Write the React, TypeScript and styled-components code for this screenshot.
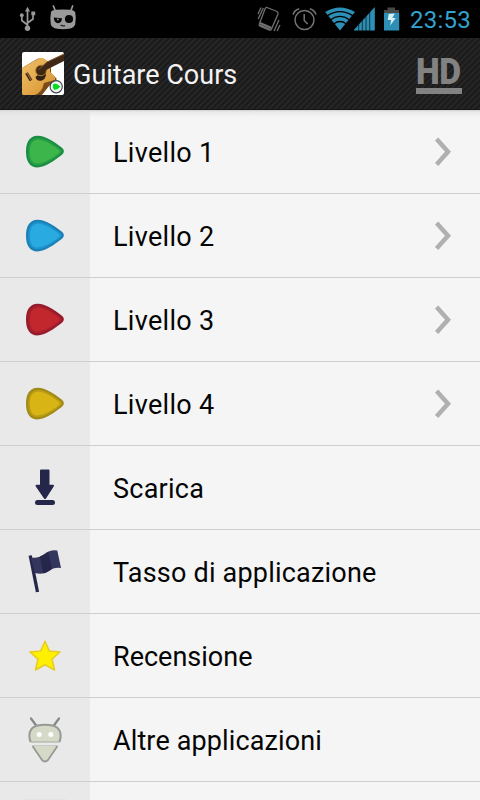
import React from 'react';
import styled, { createGlobalStyle } from 'styled-components';

const GlobalStyle = createGlobalStyle`
  * { box-sizing: border-box; }
  html, body { margin: 0; padding: 0; background: #f5f5f5; }
  body { font-family: Roboto, sans-serif; overflow: hidden; }
  svg { display: block; flex: none; }
`;

const Screen = styled.div`
  width: 480px;
  height: 800px;
  display: flex;
  flex-direction: column;
  overflow: hidden;
  background: #f5f5f5;
`;

const StatusBar = styled.header`
  height: 38px;
  flex: none;
  display: flex;
  align-items: center;
  justify-content: space-between;
  background: #000;
  padding: 0 8px 0 18px;
`;

const StatusIcons = styled.div`
  display: flex;
  align-items: center;
  height: 38px;
`;

const Clock = styled.span`
  width: 62px;
  margin-left: 10px;
  color: #33a3cf;
  font-size: 24px;
  line-height: 38px;
  letter-spacing: 0.25px;
  white-space: nowrap;
  padding-top: 1px;
`;

const ActionBar = styled.div`
  height: 72px;
  flex: none;
  display: flex;
  align-items: center;
  padding: 0 18px 0 22px;
  background: repeating-linear-gradient(135deg, #1b1b1b 0 1.5px, #262626 2.2px 3.4px, #1b1b1b 4.24px);
  border-bottom: 1px solid #161616;
`;

const Title = styled.h1`
  flex: 1;
  margin: 0 0 0 9px;
  color: #f3f3f3;
  font-size: 27px;
  font-weight: 400;
  line-height: 36px;
  white-space: nowrap;
  padding-top: 2px;
`;

const HdButton = styled.button`
  width: 46px;
  margin: 2px 0 0;
  padding: 0;
  border: 0;
  background: none;
  color: #828282;
  font: 900 37px/33px Roboto, sans-serif;
  text-align: left;
  border-bottom: 6px solid #828282;
`;

const HdText = styled.span`
  display: block;
  width: 60px;
  letter-spacing: -0.5px;
  transform: scaleX(0.91);
  transform-origin: left center;
`;

const List = styled.ul`
  flex: 1;
  margin: 0;
  padding: 0;
  list-style: none;
  overflow: hidden;
  background: linear-gradient(#d0d0d0, #e9e9e9 2px, #f5f5f5 7px);
`;

const Row = styled.li`
  height: 84px;
  display: flex;
  align-items: stretch;
  border-bottom: 1px solid #cecece;
`;

const IconCell = styled.div<{ $peek?: boolean }>`
  width: 90px;
  flex: none;
  display: flex;
  align-items: ${(p) => (p.$peek ? 'flex-start' : 'center')};
  padding-top: ${(p) => (p.$peek ? 17 : 0)}px;
  justify-content: center;
  background: rgba(220, 220, 220, 0.49);
`;

const Label = styled.span<{ $spacing: number }>`
  flex: 1;
  padding: 2px 0 0 23px;
  font-size: 27px;
  line-height: 83px;
  height: 83px;
  letter-spacing: ${(p) => p.$spacing}px;
  color: #050505;
  white-space: nowrap;
`;

const ArrowCell = styled.div`
  display: flex;
  align-items: center;
  padding-right: 28px;
`;

const UsbIcon = () => (
  <svg width="20" height="28" viewBox="0 0 20 28">
    <path d="M9.5 24V6M9.5 20L3.8 15.5V11M9.5 18L15 14V10" fill="none" stroke="#999" strokeWidth="1.7" />
    <path d="M9.5 1.8L12 6.4H7Z" fill="#999" />
    <circle cx="9.5" cy="23.2" r="2.7" fill="#999" />
    <circle cx="3.8" cy="10.2" r="1.9" fill="#999" />
    <path d="M13.3 6.5h3.9v3.8h-3.9Z" fill="#999" />
  </svg>
);

const CyanogenIcon = () => (
  <svg width="28" height="28" viewBox="0 0 28 28">
    <path d="M4.4 1L6.4 6M23.6 1L21.8 6" stroke="#999" strokeWidth="1.7" strokeLinecap="round" />
    <path d="M2 7Q3 5 7 4.8Q14 4.2 21 4.8Q25 5 26.2 7Q27.4 13 26.2 19.5Q25 23 20 23.7Q14 24.6 8 23.7Q3 23 1.8 19.5Q.8 13 2 7Z" fill="#9b9b9b" />
    <path d="M4.8 12.6L13 13.2Q12.8 18 9 18.2Q5 18 4.8 12.6Z" fill="#080808" />
    <circle cx="20" cy="14" r="4.1" fill="#080808" />
    <path d="M11.6 20Q13.4 21.3 16 20.6" stroke="#222" fill="none" strokeWidth="1.1" />
    <circle cx="8.8" cy="14.4" r=".9" fill="#999" />
  </svg>
);

const SilentIcon = () => (
  <svg width="24" height="28" viewBox="0 0 24 28" fill="none" stroke="#707070" strokeWidth="1.3">
    <path d="M10 2.5L20 6.5Q21.5 7.3 21 9L14.5 24Q14 25.5 12.5 25L3 21Q1.7 20.3 2.3 19L8 4Q8.7 2.2 10 2.5Z" />
    <path d="M3 18L14.5 23M3 20.5L13 24.8" strokeWidth="2" />
    <path d="M6.3 3L1.2 14M4 2.5L1 9M22 15L17 26M23 20L20 26" />
  </svg>
);

const AlarmIcon = () => (
  <svg width="26" height="28" viewBox="0 0 26 28" fill="none" stroke="#747474" strokeWidth="1.5">
    <circle cx="12.5" cy="15" r="9.5" />
    <path d="M12.2 9V15.5L15.7 19M1 9.5Q2.5 5 7.2 3.7M24 9.5Q22.5 5 17.8 3.7" />
  </svg>
);

const WifiIcon = () => (
  <svg width="31" height="24" viewBox="0 0 31 24">
    <path d="M15 23.5L.2 5Q15-4 30 5Z" fill="#2d8fb5" />
    <path d="M2.5 8.6Q15 .8 27.8 8.6M5.6 12.7Q15 6.2 24.4 12.7M8.8 16.7Q15 12.3 21.2 16.7" fill="none" stroke="#000" strokeWidth="1.3" />
  </svg>
);

const SignalIcon = () => (
  <svg width="22" height="24" viewBox="0 0 22 24">
    <path d="M0 23.5V22.7L20.8 0V23.5Z" fill="#2d8fb5" />
    <path d="M4.7 0V24M8.3 0V24M12 0V24M15.7 0V24" stroke="#000" strokeWidth="1" strokeOpacity=".65" />
  </svg>
);

const BatteryIcon = () => (
  <svg width="16" height="24" viewBox="0 0 16 24">
    <path d="M3.5 0.5H11V3H15V6H0V3H3.5Z" fill="#484848" />
    <path d="M0 6H15.2V23.5H0Z" fill="#2d8fb5" />
    <path d="M4.7 7L10.7 6.5L8.4 11H11.7L6.2 18.5L7.2 13H3.7Z" fill="#d9eef5" />
  </svg>
);

const GuitarIcon = () => (
  <svg width="42" height="43" viewBox="0 0 42 43">
    <defs>
      <clipPath id="appClip"><rect width="42" height="43" rx="2" /></clipPath>
      <linearGradient id="wood" x1="0" y1="0" x2="1" y2="1">
        <stop stopColor="#eebf68" /><stop offset=".55" stopColor="#e3a849" /><stop offset="1" stopColor="#d08f30" />
      </linearGradient>
    </defs>
    <g clipPath="url(#appClip)">
      <rect width="42" height="43" fill="#fff" />
      <path d="M0 16L15 7Q21 5 25 9Q30 13 29 21L35 27Q32 30 27 34L20 43H0Z" fill="#7c4a16" />
      <path d="M0 16L14 8Q20 4 24 8Q29 13 28 20Q34 24 33 28L22 31Q20 41 12 43H0Z" fill="url(#wood)" />
      <path d="M13.5 25L23 17Q26 26 20 28.5Q15 30 13.5 25Z" fill="#302114" />
      <circle cx="19" cy="18.5" r="5.3" fill="#3b2813" stroke="#ad7930" strokeWidth="1" />
      <path d="M16 18L25 10L42 2V9L28 16L19 21Z" fill="#3f2815" />
      <path d="M16 18L25 10L42 2" stroke="#81552a" fill="none" />
      <path d="M4.5 21L9 28.5" stroke="#3c2411" strokeWidth="3" />
      <path d="M5 21L9 28" stroke="#c99a56" strokeWidth=".7" />
      <circle cx="34.2" cy="34.7" r="6.1" fill="#f2f7f4" stroke="#40494a" strokeWidth="1.2" />
      <path d="M31.4 32Q33.6 30.4 38.4 34.5Q36.8 37 32.4 38.1Q29.8 35.6 31.4 32Z" fill="#08dc20" />
    </g>
  </svg>
);

const Pick = ({ fill, edge }: { fill: string; edge: string }) => (
  <svg width="40" height="34" viewBox="0 0 40 34">
    <path d="M12.5 .8C20 .6 29 6.5 37 12.8Q40.8 16.3 37 19.8C29 26 20 32.2 12.5 32.4C4.5 32.4 1 26 1 16.7S4.5 1 12.5 .8Z" fill={edge} />
    <path d="M12.2 3C19 2.2 28 8.3 35.5 14.3Q38 16.5 35.5 18.5C28 24.7 19.5 30 12.5 30.2C5.8 30.2 3.2 24.5 3.2 16.7S5.6 3.8 12.2 3Z" fill={fill} fillOpacity=".45" />
    <path d="M12.2 4.8C18 3.8 27 9.4 34 14.9Q35.5 16.7 34 18.1C27 23.7 18.5 28.2 12.5 28.5C7 28.5 4.9 23.5 4.9 16.7S7 5.5 12.2 4.8Z" fill={fill} />
  </svg>
);

const DownloadIcon = () => (
  <svg width="22" height="38" viewBox="0 0 22 38" fill="#25274a">
    <path d="M6 1.5Q6 .5 7 .5H14.5Q15.5 .5 15.5 1.5V15.8H19Q20.7 15.9 19.7 17.6L12 29.4Q11 30.8 10 29.4L1.8 17.6Q.8 15.9 2.5 15.8H6Z" />
    <rect x="1" y="31" width="20" height="5" rx="2.5" />
  </svg>
);

const FlagIcon = () => (
  <svg width="34" height="46" viewBox="0 0 34 46">
    <path d="M2.2 6.5L9.5 43" stroke="#25274a" strokeWidth="3.3" />
    <path d="M3 8.5Q11 9.5 16.5 5T29.3 1.5L33 19Q26 18 21 22T6.8 24Z" fill="#35365e" />
    <path d="M12 7.5Q17 5.2 20.5 3.2L24 20Q20 23 15.2 24.6Z" fill="#25274a" />
  </svg>
);

const StarIcon = () => (
  <svg width="34" height="34" viewBox="0 0 34 34">
    <path d="M17 2.3L21.3 12L32 13L24 20.2L26.5 31L17 25.8L7.5 31L10 20.2L2 13L12.7 12Z" fill="#fff000" stroke="#e7cc22" strokeWidth="1.6" strokeLinejoin="round" />
  </svg>
);

const RobotIcon = () => (
  <svg width="34" height="46" viewBox="0 0 34 46">
    <path d="M3 1.5L8.5 9M31 1.5L25.5 9" stroke="#858888" strokeWidth="2.2" strokeLinecap="round" />
    <path d="M2.5 25C-1 14 4 8.5 13 8Q17 7.7 21 8C30 8.5 35 14 31.5 25Z" fill="#d5d9c7" />
    <path d="M2.5 25C-1 14 4 8.5 13 8Q17 7.7 21 8C30 8.5 35 14 31.5 25" fill="none" stroke="#969994" strokeWidth="2" />
    <path d="M2.5 25H31.5M4.5 29H29.5" stroke="#a4a7a0" strokeWidth="1" />
    <path d="M4.5 29L14 43Q17 46 20 43L29.5 29Z" fill="#d5d9c7" />
    <path d="M4.5 29L14 43Q17 46 20 43L29.5 29" fill="none" stroke="#969994" strokeWidth="1.8" />
    <circle cx="11.2" cy="17.5" r="2.5" fill="#fff" />
    <circle cx="22.8" cy="17.5" r="2.5" fill="#fff" />
  </svg>
);

const MoreIcon = () => (
  <svg width="46" height="40" viewBox="0 0 46 40">
    <rect x=".5" y=".5" width="45" height="39" rx="2" fill="#dedede" />
  </svg>
);

const Chevron = () => (
  <svg width="18" height="30" viewBox="0 0 18 30">
    <path d="M2.6 2L14 14.7L2.6 27.4" fill="none" stroke="#b0b0b0" strokeWidth="4.5" />
  </svg>
);

type Item = { label: string; icon: React.ReactNode; arrow?: boolean; spacing: number; peek?: boolean };

const items: Item[] = [
  { label: 'Livello 1', icon: <Pick fill="#3cb54a" edge="#198d42" />, arrow: true, spacing: 0.3 },
  { label: 'Livello 2', icon: <Pick fill="#29abe2" edge="#1980b8" />, arrow: true, spacing: 0.3 },
  { label: 'Livello 3', icon: <Pick fill="#c1272d" edge="#961b2c" />, arrow: true, spacing: 0.3 },
  { label: 'Livello 4', icon: <Pick fill="#d8b515" edge="#a18a15" />, arrow: true, spacing: 0.3 },
  { label: 'Scarica', icon: <DownloadIcon />, spacing: 0.25 },
  { label: 'Tasso di applicazione', icon: <FlagIcon />, spacing: 0.2 },
  { label: 'Recensione', icon: <StarIcon />, spacing: 0 },
  { label: 'Altre applicazioni', icon: <RobotIcon />, spacing: 0.12 },
  { label: '', icon: <MoreIcon />, spacing: 0, peek: true },
];

const UsbSlot = styled.div`padding: 0 11px 0 0;`;
const TraySlot = styled.div<{ $gap: number }>`margin-right: ${(p) => p.$gap}px;`;

export default function App() {
  return (
    <Screen>
      <GlobalStyle />
      <StatusBar>
        <StatusIcons>
          <UsbSlot><UsbIcon /></UsbSlot>
          <CyanogenIcon />
        </StatusIcons>
        <StatusIcons>
          <TraySlot $gap={11}><SilentIcon /></TraySlot>
          <TraySlot $gap={7}><AlarmIcon /></TraySlot>
          <TraySlot $gap={-2}><WifiIcon /></TraySlot>
          <TraySlot $gap={8}><SignalIcon /></TraySlot>
          <BatteryIcon />
          <Clock>23:53</Clock>
        </StatusIcons>
      </StatusBar>
      <ActionBar>
        <GuitarIcon />
        <Title>Guitare Cours</Title>
        <HdButton><HdText>HD</HdText></HdButton>
      </ActionBar>
      <List>
        {items.map((item, i) => (
          <Row key={i}>
            <IconCell $peek={item.peek}>{item.icon}</IconCell>
            <Label $spacing={item.spacing}>{item.label}</Label>
            {item.arrow && <ArrowCell><Chevron /></ArrowCell>}
          </Row>
        ))}
      </List>
    </Screen>
  );
}
